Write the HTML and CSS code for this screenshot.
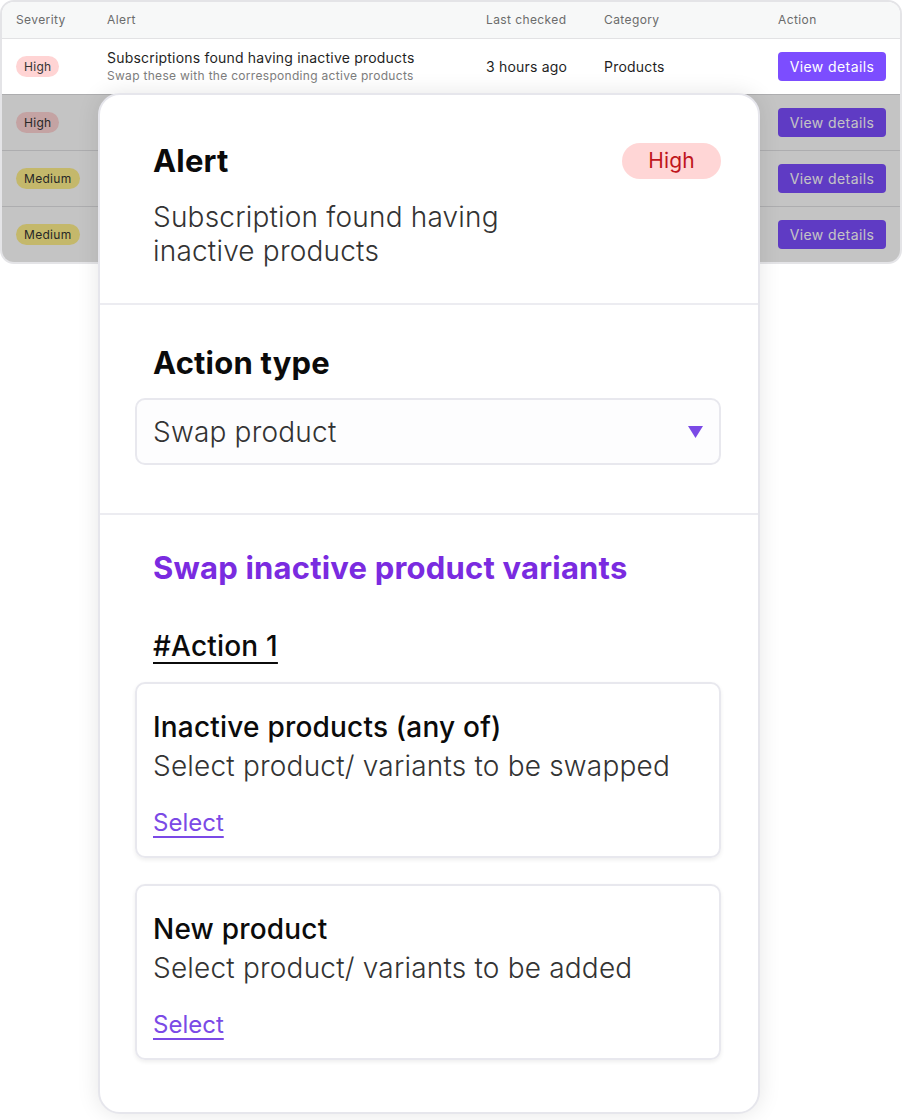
FILE: index.html
```html
<!DOCTYPE html>
<html lang="en">
<head>
    <meta charset="UTF-8">
    <meta name="viewport" content="width=device-width, initial-scale=1.0">
    <title>Alerts</title>
    <link rel="stylesheet" href="styles.css">
</head>
<body>

<div class="page">
    <div class="alerts">
        <div class="alerts-head">
            <span>Severity</span>
            <span>Alert</span>
            <span>Last checked</span>
            <span>Category</span>
            <span>Action</span>
        </div>
        <div class="alerts-row">
            <div><span class="sev sev-high">High</span></div>
            <div class="alert-text">
                <div class="alert-title">Subscriptions found having inactive products</div>
                <div class="alert-sub">Swap these with the corresponding active products</div>
            </div>
            <div>3 hours ago</div>
            <div>Products</div>
            <div><button class="view-btn">View details</button></div>
        </div>
        <!-- the rest of the rows sit under the drawer, only severity and action show -->
        <div class="alerts-row">
            <div><span class="sev sev-high">High</span></div>
            <div></div>
            <div></div>
            <div></div>
            <div><button class="view-btn">View details</button></div>
        </div>
        <div class="alerts-row">
            <div><span class="sev sev-medium">Medium</span></div>
            <div></div>
            <div></div>
            <div></div>
            <div><button class="view-btn">View details</button></div>
        </div>
        <div class="alerts-row">
            <div><span class="sev sev-medium">Medium</span></div>
            <div></div>
            <div></div>
            <div></div>
            <div><button class="view-btn">View details</button></div>
        </div>
        <div class="dim"></div>
    </div>

    <div class="drawer">
        <div class="drawer-sec sec-alert">
            <div class="alert-head">
                <h2>Alert</h2>
                <span class="pill">High</span>
            </div>
            <p class="alert-desc">Subscription found having inactive products</p>
        </div>

        <div class="drawer-sec sec-type">
            <h2>Action type</h2>
            <div class="select-box">
                <span>Swap product</span>
                <svg width="15" height="12" viewBox="0 0 15 12"><path d="M0 0 H15 L7.5 12 Z" fill="#7b4ae6"/></svg>
            </div>
        </div>

        <div class="drawer-sec sec-swap">
            <h2 class="swap-title">Swap inactive product variants</h2>
            <div class="action-label">#Action 1</div>

            <div class="pick-card">
                <div class="pick-title">Inactive products (any of)</div>
                <div class="pick-desc">Select product/ variants to be swapped</div>
                <a class="pick-link" href="#">Select</a>
            </div>

            <div class="pick-card">
                <div class="pick-title">New product</div>
                <div class="pick-desc">Select product/ variants to be added</div>
                <a class="pick-link" href="#">Select</a>
            </div>
        </div>
    </div>
</div>

</body>
</html>
```

FILE: styles.css
```css
body {
    margin: 0;
    font-family: Inter, "Noto Sans", sans-serif;
    background: #fff;
    color: #1f1f1f;
}
.page {
    position: relative;
    width: 902px;
    height: 1120px;
}

/* table behind the drawer */
.alerts {
    position: relative;
    border: 2px solid #e4e4e7;
    border-radius: 14px;
    overflow: hidden;
    background: #fff;
}
.alerts-head, .alerts-row {
    display: grid;
    grid-template-columns: 91px 379px 118px 174px 1fr;
    align-items: center;
    padding: 0 14px;
}
.alerts-head {
    height: 36px;
    background: #f7f8f8;
    font-size: 12px;
    letter-spacing: 0.4px;
    color: #6b6b6b;
    padding-bottom: 1px;
    box-sizing: border-box;
}
.alerts-row {
    height: 55px;
    border-top: 1px solid #e2e2e4;
    font-size: 14px;
    letter-spacing: 0.2px;
    color: #1f1f1f;
}
.sev {
    display: inline-block;
    font-size: 12px;
    line-height: 21px;
    padding: 0 8px;
    border-radius: 11px;
    letter-spacing: 0.3px;
    color: #333;
}
.sev-high {
    background: #ffd4d4;
}
.sev-medium {
    background: #fff08c;
}
.alert-title {
    font-size: 14px;
    line-height: 18px;
}
.alert-sub {
    margin-top: 1px;
    font-size: 12px;
    line-height: 16px;
    letter-spacing: 0.3px;
    color: #7d7d7d;
}
.view-btn {
    width: 108px;
    height: 29px;
    border: none;
    border-radius: 4px;
    background: #7c4dff;
    color: #fff;
    font-family: inherit;
    font-size: 14px;
    letter-spacing: 0.4px;
}
.dim {
    position: absolute;
    top: 92px;
    left: 0;
    right: 0;
    bottom: 0;
    background: rgba(0, 0, 0, 0.23);
}

/* drawer */
.drawer {
    position: absolute;
    left: 98px;
    top: 93px;
    width: 662px;
    box-sizing: border-box;
    background: #fff;
    border: 2px solid #e6e6ec;
    border-radius: 22px;
    box-shadow: 0 0 22px rgba(0, 0, 0, 0.1);
}
.drawer-sec {
    padding: 0 37px 0 35px;
    border-bottom: 2px solid #ececf1;
}
.drawer-sec:last-child {
    border-bottom: none;
}
.drawer h2 {
    margin: 0;
    padding-left: 18px;
    font-size: 31px;
    line-height: 36px;
    font-weight: 700;
    letter-spacing: 0.2px;
    color: #0b0b0b;
}
.sec-alert {
    padding-top: 48px;
    padding-bottom: 35px;
}
.alert-head {
    display: flex;
    justify-content: space-between;
    align-items: center;
}
.pill {
    height: 36px;
    line-height: 36px;
    padding: 0 26px;
    border-radius: 18px;
    background: #ffd6d6;
    color: #c0161d;
    font-size: 21px;
    letter-spacing: 0.2px;
}
.alert-desc {
    margin: 21px 0 0;
    padding-left: 18px;
    max-width: 380px;
    font-size: 28px;
    line-height: 34px;
    font-weight: 300;
    letter-spacing: 0.2px;
    color: #333;
}

.sec-type {
    padding-top: 40px;
    padding-bottom: 48px;
}
.select-box {
    margin-top: 17px;
    height: 67px;
    box-sizing: border-box;
    border: 2px solid #e8e8ee;
    border-radius: 10px;
    padding: 0 16px;
    display: flex;
    align-items: center;
    justify-content: space-between;
    font-size: 28px;
    font-weight: 300;
    letter-spacing: 0.2px;
    color: #333;
    background: #fdfdfe;
}

.sec-swap {
    padding-top: 35px;
    padding-bottom: 52px;
}
.drawer .swap-title {
    color: #7a2be0;
}
.action-label {
    display: inline-block;
    margin: 43px 0 0 18px;
    font-size: 28px;
    line-height: 34px;
    font-weight: 500;
    letter-spacing: 0.2px;
    color: #0b0b0b;
    text-decoration: underline;
    text-decoration-thickness: 2px;
    text-underline-offset: 6px;
}
.pick-card {
    margin-top: 19px;
    border: 2px solid #e8e8ee;
    border-radius: 10px;
    padding: 26px 16px 18px;
    box-shadow: 0 2px 4px rgba(0, 0, 0, 0.07);
}
.pick-card + .pick-card {
    margin-top: 26px;
}
.pick-title {
    font-size: 28px;
    line-height: 34px;
    font-weight: 500;
    letter-spacing: 0.2px;
    color: #0b0b0b;
}
.pick-desc {
    margin-top: 5px;
    font-size: 28px;
    line-height: 34px;
    font-weight: 300;
    letter-spacing: 0.2px;
    color: #333;
}
.pick-link {
    display: inline-block;
    margin-top: 25px;
    font-size: 24px;
    line-height: 30px;
    color: #7b4ae6;
    text-decoration-thickness: 2px;
    text-underline-offset: 5px;
}
```
